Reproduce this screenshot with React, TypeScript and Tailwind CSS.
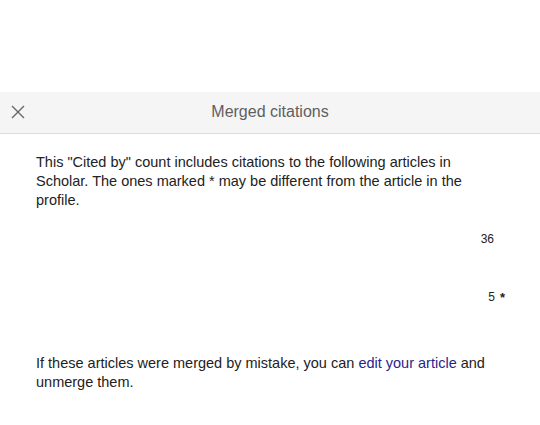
import React from 'react';

const App: React.FC = () => {
  return (
    <div className="w-[540px] h-[425px] bg-white font-['Liberation_Sans',Arial,sans-serif] text-[#222]">
      <div className="h-[92px]" />
      <div className="h-[42px] bg-[#f5f5f5] border-b border-[#dcdcdc] flex items-center relative">
        <button className="absolute left-[10px] top-[12px] w-4 h-4 flex items-center justify-center">
          <svg width="14" height="14" viewBox="0 0 14 14">
            <path d="M1 1L13 13M13 1L1 13" stroke="#666" strokeWidth="1.4" />
          </svg>
        </button>
        <div className="flex-1 text-center text-[16px] text-[#5f5f5f] pb-[1px]">Merged citations</div>
      </div>
      <div className="pl-[36px] pr-[46px] pt-[19px] text-[14.5px] leading-[19px]">
        <p>
          This "Cited by" count includes citations to the following articles in Scholar. The ones marked * may be
          different from the article in the profile.
        </p>
        <div className="mt-[20px] flex justify-end text-[12px] h-[18px]">
          <span>36</span>
        </div>
        <div className="mt-[40px] flex justify-end text-[12px] h-[18px] -mr-[11px]">
          <span>5</span>
          <span className="ml-[5px] font-bold text-[13px]">*</span>
        </div>
        <p className="mt-[48px]">
          If these articles were merged by mistake, you can{' '}
          <a className="text-[#2a1f8c]">edit your article</a> and unmerge them.
        </p>
      </div>
    </div>
  );
};

export default App;
